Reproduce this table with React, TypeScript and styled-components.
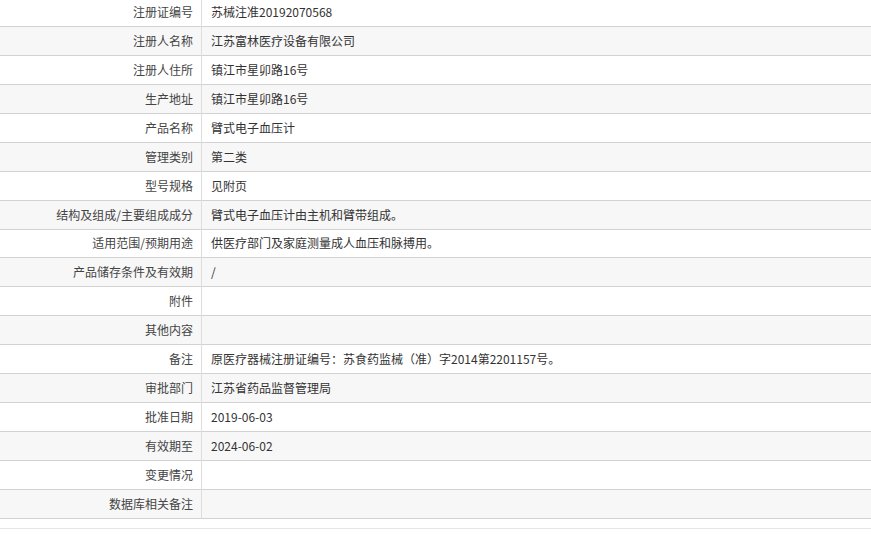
import React from "react";
import styled, { createGlobalStyle } from "styled-components";

const GlobalStyle = createGlobalStyle`
  html, body { margin: 0; padding: 0; background: #ffffff; }
  body {
    font-family: "Noto Sans CJK SC", "Noto Sans", "Liberation Sans", sans-serif;
    font-size: 12px;
    color: #333333;
    overflow: hidden;
  }
`;

const Page = styled.div`
  width: 871px;
  display: flex;
  flex-direction: column;
`;

const Table = styled.table`
  width: 100%;
  border-collapse: collapse;
  margin-top: -2px;
  border-bottom: 1px solid #dcdce4;
`;

const Row = styled.tr<{ $alt: boolean }>`
  background: ${(p) => (p.$alt ? "#f7f7f7" : "#ffffff")};
  border-bottom: 1px solid #d2d2d2;
`;

const LabelCell = styled.td`
  width: 193px;
  height: 27.94px;
  padding: 0 8px 0 0;
  text-align: right;
  white-space: nowrap;
  color: #444444;
  border-right: 1px solid #dddddd;
  line-height: 16px;
  vertical-align: middle;
`;

const ValueCell = styled.td`
  padding: 0 0 0 9px;
  text-align: left;
  white-space: nowrap;
  color: #333333;
  line-height: 16px;
  vertical-align: middle;
`;

const FooterRule = styled.div`
  margin-top: 9px;
  border-top: 1px solid #e6e6e6;
  height: 6px;
`;

const rows: [string, string][] = [
  ["注册证编号", "苏械注准20192070568"],
  ["注册人名称", "江苏富林医疗设备有限公司"],
  ["注册人住所", "镇江市星卯路16号"],
  ["生产地址", "镇江市星卯路16号"],
  ["产品名称", "臂式电子血压计"],
  ["管理类别", "第二类"],
  ["型号规格", "见附页"],
  ["结构及组成/主要组成成分", "臂式电子血压计由主机和臂带组成。"],
  ["适用范围/预期用途", "供医疗部门及家庭测量成人血压和脉搏用。"],
  ["产品储存条件及有效期", "/"],
  ["附件", ""],
  ["其他内容", ""],
  ["备注", "原医疗器械注册证编号：苏食药监械（准）字2014第2201157号。"],
  ["审批部门", "江苏省药品监督管理局"],
  ["批准日期", "2019-06-03"],
  ["有效期至", "2024-06-02"],
  ["变更情况", ""],
  ["数据库相关备注", ""],
];

export default function App() {
  return (
    <>
      <GlobalStyle />
      <Page>
        <Table>
          <tbody>
            {rows.map(([label, value], i) => (
              <Row key={label} $alt={i % 2 === 1}>
                <LabelCell>{label}</LabelCell>
                <ValueCell>{value}</ValueCell>
              </Row>
            ))}
          </tbody>
        </Table>
        <FooterRule />
      </Page>
    </>
  );
}
